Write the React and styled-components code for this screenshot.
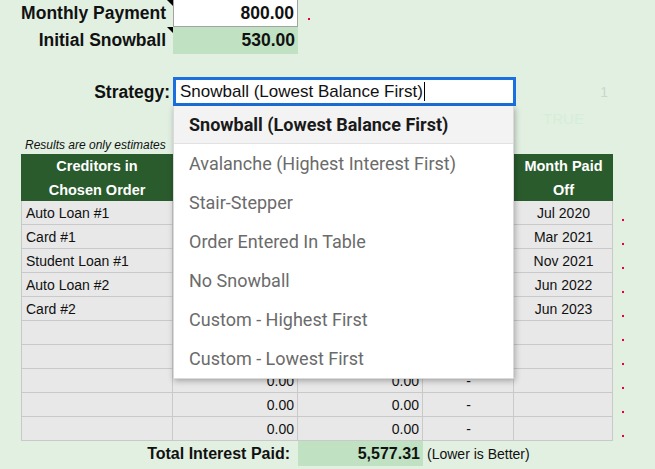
import React from "react"
import styled, { createGlobalStyle, css } from "styled-components"

const GlobalStyle = createGlobalStyle`
  html, body {
    margin: 0;
    padding: 0;
  }
  body {
    background: #e2f0e2;
    font-family: "Liberation Sans", Arial, sans-serif;
  }
`

const Sheet = styled.div`
  width: 655px;
  height: 469px;
  overflow: hidden;
  background: #e2f0e2;
  display: flex;
  flex-direction: column;
  color: #111;
`

const Row = styled.div`
  display: grid;
  grid-template-columns: 21px 152px 125px 125px 91px 99px 1fr;
  height: ${p => p.h}px;
  flex: none;
`

const Label = styled.div`
  grid-column: 1 / 3;
  position: relative;
  display: flex;
  align-items: center;
  justify-content: flex-end;
  padding-right: ${p => (p.note ? 7 : 3)}px;
  font-weight: bold;
  font-size: 17.5px;
  ${p =>
    p.note &&
    css`
      &::after {
        content: "";
        position: absolute;
        top: 0;
        right: 0;
        border-top: 6px solid #000;
        border-left: 6px solid transparent;
      }
    `}
`

const ValueCell = styled.div`
  grid-column: 3;
  box-sizing: border-box;
  display: flex;
  align-items: center;
  justify-content: flex-end;
  padding-right: 3px;
  font-weight: bold;
  font-size: 17.5px;
  background: ${p => (p.green ? "#c0e2c3" : "#fff")};
  border: ${p => (p.green ? "none" : "1px solid #a3a3a3")};
  border-top: none;
`

const RedDot = styled.span`
  grid-column: ${p => p.col};
  align-self: end;
  margin: 0 0 ${p => p.bottom || 4}px ${p => p.left || 9}px;
  width: 2px;
  height: 2px;
  background: #e8003a;
`

const StrategyCell = styled.div`
  grid-column: 3 / 6;
  position: relative;
  margin: -1px -2px 0 0;
`

const StrategyInput = styled.div`
  box-sizing: border-box;
  height: 29px;
  border: 3px solid #1b6fde;
  background: #fff;
  display: flex;
  align-items: center;
  padding-left: 4px;
  font-size: 17px;
  color: #111;
`

const Caret = styled.span`
  display: inline-block;
  width: 1px;
  height: 19px;
  background: #000;
  margin-left: 1px;
`

const Menu = styled.ul`
  position: absolute;
  top: 100%;
  left: 0;
  width: 341px;
  box-sizing: border-box;
  margin: 0;
  padding: 0;
  list-style: none;
  background: #fff;
  border: 1px solid #dadada;
  border-top: none;
  box-shadow: 1px 2px 6px rgba(0, 0, 0, 0.3);
  z-index: 10;
  font-family: Roboto, "Noto Sans", sans-serif;
`

const MenuItem = styled.li`
  box-sizing: border-box;
  height: ${p => (p.active ? 38 : 39)}px;
  display: flex;
  align-items: center;
  padding-left: 15px;
  font-size: 18px;
  color: ${p => (p.active ? "#1a1a1a" : "#6b6b6b")};
  font-weight: ${p => (p.active ? 700 : 400)};
  background: ${p => (p.active ? "#f3f3f3" : "#fff")};
  border-bottom: ${p => (p.active ? "1px solid #e2e2e2" : "none")};
`

const Faint = styled.div`
  grid-column: 6;
  display: flex;
  align-items: center;
  justify-content: ${p => (p.center ? "center" : "flex-end")};
  padding-right: ${p => (p.center ? 0 : 5)}px;
  font-size: ${p => (p.center ? 15 : 14)}px;
  color: ${p => p.color};
`

const Note = styled.div`
  grid-column: 2 / 4;
  align-self: end;
  padding: 0 0 2px 4px;
  font-size: 12px;
  font-style: italic;
  white-space: nowrap;
`

const Head = styled.div`
  grid-column: ${p => p.col};
  background: #2a5b2d;
  color: #fff;
  font-weight: bold;
  font-size: 14.5px;
  line-height: 24px;
  text-align: center;
`

const Cell = styled.div`
  grid-column: ${p => p.col};
  box-sizing: border-box;
  background: #e8e8e8;
  border-right: 1px solid #c9c9c9;
  border-bottom: 1px solid #c9c9c9;
  ${p => p.col === 2 && "border-left: 1px solid #c9c9c9;"}
  display: flex;
  align-items: center;
  justify-content: ${p =>
    p.align === "right" ? "flex-end" : p.align === "center" ? "center" : "flex-start"};
  padding: 0 3px 0 4px;
  font-size: 14px;
  white-space: nowrap;
  overflow: hidden;
`

const TotalLabel = styled.div`
  grid-column: 1 / 4;
  display: flex;
  align-items: center;
  justify-content: flex-end;
  padding-right: 8px;
  font-weight: bold;
  font-size: 16px;
`

const TotalValue = styled.div`
  grid-column: 4;
  background: #c0e2c3;
  display: flex;
  align-items: center;
  justify-content: flex-end;
  padding-right: 3px;
  font-weight: bold;
  font-size: 16px;
`

const TotalHint = styled.div`
  grid-column: 5 / 7;
  display: flex;
  align-items: center;
  padding-left: 4px;
  font-size: 14px;
  white-space: nowrap;
`

const strategies = [
  "Snowball (Lowest Balance First)",
  "Avalanche (Highest Interest First)",
  "Stair-Stepper",
  "Order Entered In Table",
  "No Snowball",
  "Custom - Highest First",
  "Custom - Lowest First",
]

// columns C-E of the first rows sit under the open dropdown, so they stay blank
const creditors = [
  { name: "Auto Loan #1", off: "Jul 2020" },
  { name: "Card #1", off: "Mar 2021" },
  { name: "Student Loan #1", off: "Nov 2021" },
  { name: "Auto Loan #2", off: "Jun 2022" },
  { name: "Card #2", off: "Jun 2023" },
  { name: "" },
  { name: "" },
  { name: "", paid: "0.00", interest: "0.00", months: "-" },
  { name: "", paid: "0.00", interest: "0.00", months: "-" },
  { name: "", paid: "0.00", interest: "0.00", months: "-" },
]

export default function App() {
  return (
    <Sheet>
      <GlobalStyle />
      <Row h={27}>
        <Label note>Monthly Payment</Label>
        <ValueCell>800.00</ValueCell>
        <RedDot col={4} left={10} bottom={7} />
      </Row>
      <Row h={27}>
        <Label note>Initial Snowball</Label>
        <ValueCell green>530.00</ValueCell>
      </Row>
      <Row h={24} />
      <Row h={28}>
        <Label>Strategy:</Label>
        <StrategyCell>
          <StrategyInput>
            {strategies[0]}
            <Caret />
          </StrategyInput>
          <Menu>
            {strategies.map((s, i) => (
              <MenuItem key={s} active={i === 0}>
                {s}
              </MenuItem>
            ))}
          </Menu>
        </StrategyCell>
        <Faint color="#cdd5cd">1</Faint>
      </Row>
      <Row h={24}>
        <Faint center color="#d5eed7">TRUE</Faint>
      </Row>
      <Row h={24}>
        <Note>Results are only estimates</Note>
      </Row>
      <Row h={47}>
        <Head col={2}>Creditors in<br />Chosen Order</Head>
        <Head col={3} />
        <Head col={4} />
        <Head col={5} />
        <Head col={6}>Month Paid<br />Off</Head>
      </Row>
      {creditors.map((c, i) => (
        <Row h={24} key={i}>
          <Cell col={2}>{c.name}</Cell>
          <Cell col={3} align="right">{c.paid}</Cell>
          <Cell col={4} align="right">{c.interest}</Cell>
          <Cell col={5} align="center">{c.months}</Cell>
          <Cell col={6} align="center">{c.off}</Cell>
          <RedDot col={7} />
        </Row>
      ))}
      <Row h={25}>
        <TotalLabel>Total Interest Paid:</TotalLabel>
        <TotalValue>5,577.31</TotalValue>
        <TotalHint>(Lower is Better)</TotalHint>
      </Row>
    </Sheet>
  )
}
